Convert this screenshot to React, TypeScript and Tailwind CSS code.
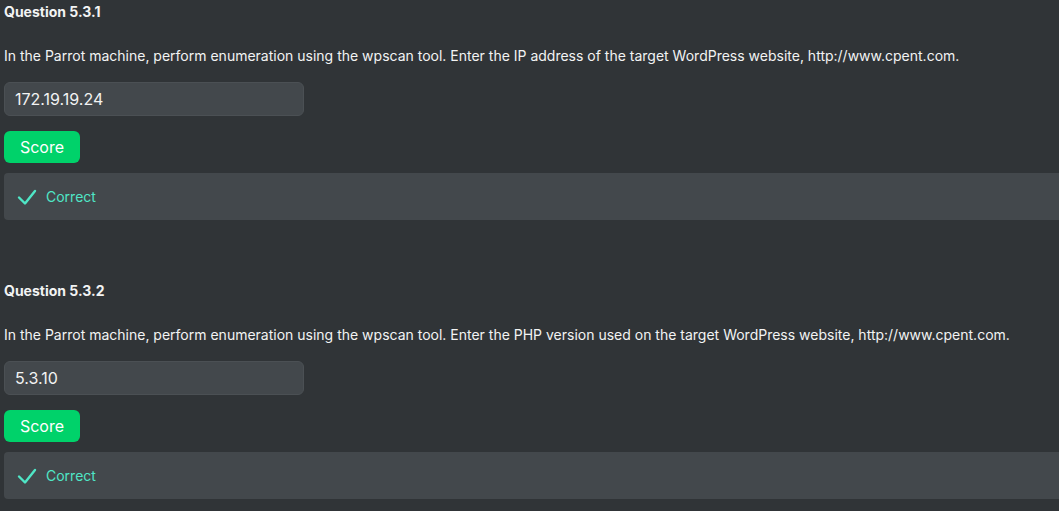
const questions = [
  {
    id: '5.3.1',
    text: 'In the Parrot machine, perform enumeration using the wpscan tool. Enter the IP address of the target WordPress website, http://www.cpent.com.',
    answer: '172.19.19.24',
  },
  {
    id: '5.3.2',
    text: 'In the Parrot machine, perform enumeration using the wpscan tool. Enter the PHP version used on the target WordPress website, http://www.cpent.com.',
    answer: '5.3.10',
  },
];

const CheckMark = () => (
  <svg width="20" height="18" viewBox="0 0 20 18" fill="none" className="text-[#4fe6c6]">
    <path d="M2 9.5 8 15.5 18 3" stroke="currentColor" strokeWidth="2.4" strokeLinecap="round" strokeLinejoin="round" />
  </svg>
);

const App = () => {
  return (
    <div className="h-[511px] w-full overflow-hidden bg-[#303437] text-[#f2f3f3] font-['Inter',sans-serif]">
      {questions.map((q) => (
        <div key={q.id} className="pl-1 mb-[59px]">
          {/* Heading */}
          <h2 className="text-[14px] font-bold leading-[24px]">Question {q.id}</h2>
          <p className="mt-[22px] text-[14px] leading-[20px]">{q.text}</p>

          <input
            type="text"
            defaultValue={q.answer}
            className="mt-4 block h-[34px] w-[300px] rounded-md border border-[#4b5054] bg-[#43484c] px-[10px] text-[16px] text-[#f2f3f3] outline-none"
          />

          <button className="mt-[15px] block h-8 w-[76px] rounded-md bg-[#00d26a] text-[16px] text-white">
            Score
          </button>

          <div className="mt-[10px] flex h-[47px] w-[1100px] items-center gap-[9px] rounded-[4px] bg-[#43484c] pl-[13px]">
            <CheckMark />
            <span className="text-[14px] text-[#4fe6c6]">Correct</span>
          </div>
        </div>
      ))}
    </div>
  );
};

export default App;
